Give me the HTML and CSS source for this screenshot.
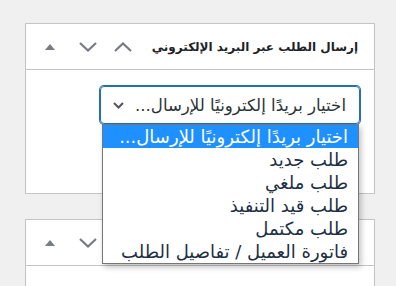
FILE: index.html
```html
<!DOCTYPE html>
<html lang="ar" dir="rtl">
<head>
<meta charset="UTF-8">
<title>إرسال الطلب عبر البريد الإلكتروني</title>
<link rel="stylesheet" href="styles.css">
</head>
<body>
<div class="wrap">
  <div class="postbox">
    <div class="postbox-header">
      <h2 class="hndle">إرسال الطلب عبر البريد الإلكتروني</h2>
      <div class="handle-actions">
        <button class="handle-btn up" aria-label="نقل لأعلى">
          <svg width="18" height="10" viewBox="0 0 18 10"><path d="M1 9 L9 1.5 L17 9" fill="none" stroke="#787c82" stroke-width="2.2"/></svg>
        </button>
        <button class="handle-btn down" aria-label="نقل لأسفل">
          <svg width="18" height="10" viewBox="0 0 18 10"><path d="M1 1 L9 8.5 L17 1" fill="none" stroke="#787c82" stroke-width="2.2"/></svg>
        </button>
        <button class="handle-btn toggle" aria-label="تبديل اللوحة">
          <svg width="10" height="6" viewBox="0 0 10 6"><path d="M0 6 L5 0 L10 6 Z" fill="#787c82"/></svg>
        </button>
      </div>
    </div>
    <div class="inside">
      <div class="select-wrap">
        <div class="select">
          <span class="select-value">اختيار بريدًا إلكترونيًا للإرسال...</span>
          <svg class="select-arrow" width="11" height="7" viewBox="0 0 11 7"><path d="M1 1 L5.5 5.5 L10 1" fill="none" stroke="#50575e" stroke-width="2"/></svg>
        </div>
        <!-- القائمة المنسدلة المفتوحة -->
        <ul class="select-list">
          <li class="selected">اختيار بريدًا إلكترونيًا للإرسال...</li>
          <li>طلب جديد</li>
          <li>طلب ملغي</li>
          <li>طلب قيد التنفيذ</li>
          <li>طلب مكتمل</li>
          <li>فاتورة العميل / تفاصيل الطلب</li>
        </ul>
      </div>
    </div>
  </div>

  <div class="postbox">
    <div class="postbox-header">
      <h2 class="hndle">ملاحظات الطلب</h2>
      <div class="handle-actions">
        <button class="handle-btn up" aria-label="نقل لأعلى">
          <svg width="18" height="10" viewBox="0 0 18 10"><path d="M1 9 L9 1.5 L17 9" fill="none" stroke="#787c82" stroke-width="2.2"/></svg>
        </button>
        <button class="handle-btn down" aria-label="نقل لأسفل">
          <svg width="18" height="10" viewBox="0 0 18 10"><path d="M1 1 L9 8.5 L17 1" fill="none" stroke="#787c82" stroke-width="2.2"/></svg>
        </button>
        <button class="handle-btn toggle" aria-label="تبديل اللوحة">
          <svg width="10" height="6" viewBox="0 0 10 6"><path d="M0 6 L5 0 L10 6 Z" fill="#787c82"/></svg>
        </button>
      </div>
    </div>
    <div class="inside tall"></div>
  </div>
</div>
</body>
</html>
```

FILE: styles.css
```css
body {
  margin: 0;
  background-color: #f0f0f1;
  font-family: "DejaVu Sans", sans-serif;
  color: #1d2327;
  direction: ltr;
  overflow: hidden;
}

.wrap {
  margin-top: 23px;
  margin-left: 25px;
  width: 350px;
}

.postbox {
  direction: rtl;
  background-color: #fff;
  border: 1px solid #c3c4c7;
  margin-bottom: 25px;
}

.postbox-header {
  display: flex;
  align-items: center;
  justify-content: space-between;
  height: 45px;
  border-bottom: 1px solid #c3c4c7;
}

.hndle {
  margin: 0;
  padding-right: 16px;
  font-family: Tahoma, "DejaVu Sans", sans-serif;
  font-size: 12px;
  font-weight: bold;
  color: #1d2327;
  white-space: nowrap;
}

.handle-actions {
  display: flex;
  align-items: center;
  padding-left: 5px;
}

.handle-btn {
  display: flex;
  align-items: center;
  justify-content: center;
  background: none;
  border: none;
  padding: 0;
  height: 36px;
  cursor: pointer;
}

.handle-btn.up {
  width: 32px;
}

.handle-btn.down {
  width: 38px;
}

.handle-btn.toggle {
  width: 38px;
}

.inside {
  height: 123px;
  padding: 16px 14px 0 0;
  box-sizing: border-box;
}

.inside.tall {
  height: 60px;
}

.select-wrap {
  position: relative;
  width: 260px;
}

.select {
  display: flex;
  align-items: center;
  justify-content: space-between;
  height: 38px;
  box-sizing: border-box;
  padding: 0 13px 0 12px;
  border: 1px solid #2271b1;
  border-radius: 4px;
  box-shadow: 0 0 0 1px #2271b1;
  font-size: 16.6px;
  color: #2c3338;
}

.select-value {
  white-space: nowrap;
}

.select-arrow {
  flex-shrink: 0;
}

/* القائمة المنسدلة */
.select-list {
  position: absolute;
  top: 38px;
  right: 1px;
  width: 255px;
  margin: 0;
  padding: 0;
  list-style: none;
  background-color: #fff;
  border: 1px solid #767676;
  box-shadow: 2px 3px 6px rgba(0,0,0,0.25);
  z-index: 5;
}

.select-list li {
  height: 23px;
  line-height: 23px;
  padding-right: 10px;
  font-size: 18px;
  color: #1d2f45;
  white-space: nowrap;
}

.select-list li.selected {
  background-color: #1e90ff;
  color: #fff;
}
```
